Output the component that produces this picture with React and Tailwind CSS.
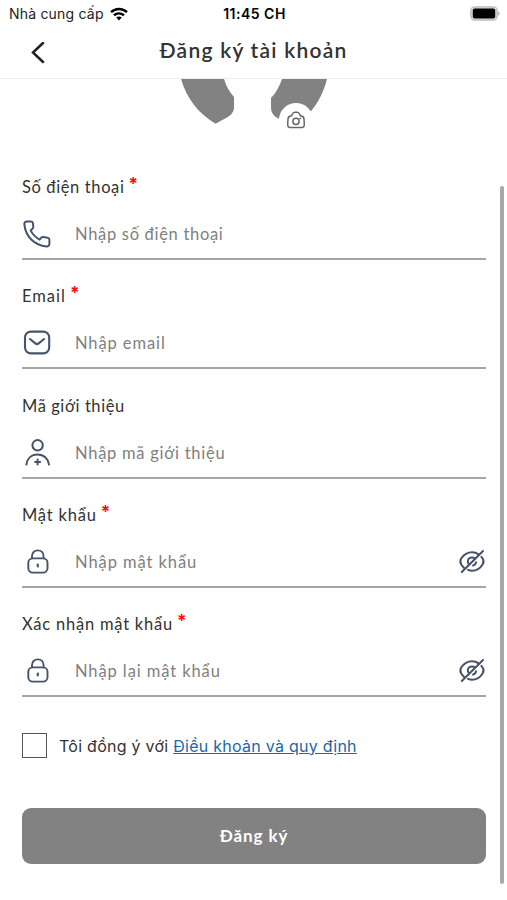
import React, { useState } from 'react';

const PhoneIcon = () => (
  <svg width="28" height="28" viewBox="0 0 28 28" fill="none" stroke="currentColor" strokeWidth="2" strokeLinecap="round" strokeLinejoin="round">
    <path d="M4 1.4H8C9.1 1.4 9.8 2 9.9 3L10.3 6.6C10.4 7.5 10.1 8.2 9.4 8.8L7.6 10.4C9.6 14.2 12.6 17.4 16.6 19.6L18.1 17.8C18.7 17.1 19.4 16.9 20.3 17L24.6 17.7C25.8 17.9 26.4 18.6 26.4 19.7V23.6C26.4 25.6 25.2 26.6 23.4 26.4C11.4 25.4 2.4 16.4 1.4 4.4C1.2 2.6 2.2 1.4 4 1.4Z" />
  </svg>
);

const MailIcon = () => (
  <svg width="28" height="28" viewBox="0 0 28 28" fill="none" stroke="currentColor" strokeWidth="2.1" strokeLinecap="round" strokeLinejoin="round">
    <rect x="2" y="2.6" width="24.2" height="21.8" rx="6" />
    <path d="M7 10L12.3 14.4C13.3 15.2 14.7 15.2 15.7 14.4L21 10" />
  </svg>
);

const ReferralIcon = () => (
  <svg width="28" height="28" viewBox="0 0 28 28" fill="none" stroke="currentColor" strokeWidth="2" strokeLinecap="round">
    <circle cx="14.6" cy="6.3" r="5.2" />
    <path d="M3.4 25.6C4.2 19.6 8.5 15.6 14.6 15.6S25.2 19.6 26 25.6" />
    <path d="M14.6 20.4V25.4M12.1 22.9H17.1" />
  </svg>
);

const LockIcon = () => (
  <svg width="28" height="28" viewBox="0 0 28 28" fill="none" stroke="currentColor" strokeWidth="1.9" strokeLinecap="round">
    <rect x="5.3" y="10.4" width="19.2" height="14.2" rx="4.4" />
    <path d="M9 10.2V8.2C9 4.6 11.4 2.4 14.8 2.4S20.6 4.6 20.6 8.2V10.2" />
    <path d="M14.8 16.6V18.4" strokeWidth="2.2" />
  </svg>
);

const EyeOffIcon = () => (
  <svg width="28" height="28" viewBox="0 0 28 28" fill="none" stroke="currentColor" strokeWidth="2" strokeLinecap="round" strokeLinejoin="round">
    <path d="M20.6 6.4C18.6 5 16.4 4.3 14 4.3C9.6 4.3 5.8 6.7 3.2 10.5C2.1 12.3 2.1 14.7 3.2 16.5C4 17.8 5 18.9 6.1 19.9" />
    <path d="M10 21.9C11.3 22.4 12.6 22.7 14 22.7C18.4 22.7 22.2 20.3 24.6 16.5C25.8 14.7 25.8 12.3 24.6 10.5C24.2 9.9 23.8 9.3 23.4 8.8" />
    <path d="M16.9 10.6C16.1 9.8 15.1 9.4 14 9.4C11.7 9.4 9.8 11.2 9.8 13.5C9.8 14.6 10.3 15.6 11 16.4" />
    <path d="M18 14.3C17.7 16 16.4 17.2 14.8 17.6" />
    <path d="M25 3L3.8 24" />
  </svg>
);

const CameraIcon = () => (
  <svg width="20" height="18" viewBox="0 0 20 18" fill="none" stroke="currentColor" strokeWidth="1.5" strokeLinejoin="round" strokeLinecap="round">
    <path d="M4.9 16.6H15.1C17.4 16.6 18.4 15.2 18.3 13.3L18 8C17.9 6 16.6 5 15.2 4.9C14.7 4.9 14.3 4.5 14 4L13.2 2.5C12.8 1.7 12 1.3 11.2 1.3H8.8C8 1.3 7.2 1.7 6.8 2.5L6 4C5.7 4.5 5.3 4.9 4.8 4.9C3.4 5 2.1 6 2 8L1.7 13.3C1.6 15.2 2.6 16.6 4.9 16.6Z" />
    <circle cx="10" cy="10.4" r="3.1" />
    <path d="M14 7.6L14.6 7.2" />
  </svg>
);

const fields = [
  { id: 'phone', label: 'Số điện thoại', required: true, placeholder: 'Nhập số điện thoại', icon: PhoneIcon, labelClass: 'tracking-[0.62px]', inputClass: 'tracking-[0.69px]' },
  { id: 'email', label: 'Email', required: true, placeholder: 'Nhập email', icon: MailIcon, labelClass: 'tracking-[1px]', inputClass: 'tracking-[0.9px]' },
  { id: 'referral', label: 'Mã giới thiệu', required: false, placeholder: 'Nhập mã giới thiệu', icon: ReferralIcon, labelClass: 'tracking-[0.57px]', inputClass: 'tracking-[0.73px]' },
  { id: 'password', label: 'Mật khẩu', required: true, placeholder: 'Nhập mật khẩu', icon: LockIcon, secret: true, labelClass: 'tracking-[0.8px]', inputClass: 'tracking-[0.93px]' },
  { id: 'confirm', label: 'Xác nhận mật khẩu', required: true, placeholder: 'Nhập lại mật khẩu', icon: LockIcon, secret: true, labelClass: 'tracking-[0.78px]', inputClass: 'tracking-[0.9px]' },
];

const StatusBar = () => (
  <div className="grid h-[27px] grid-cols-3 items-center pl-[9px] pr-[7px] font-['Inter',sans-serif] text-black">
    <div className="flex items-center gap-[6px]">
      <span className="whitespace-nowrap text-[14px] tracking-[0.2px] text-[#222]">Nhà cung cấp</span>
      <svg width="18" height="14" viewBox="0 0 18 14" fill="none" stroke="currentColor" strokeWidth="2.4">
        <path d="M1 5.2C5.5 0.9 12.5 0.9 17 5.2" />
        <path d="M4 8.4C6.8 5.7 11.2 5.7 14 8.4" />
        <path d="M9 13.4L6.2 10.6C7.8 9.1 10.2 9.1 11.8 10.6Z" fill="currentColor" stroke="none" />
      </svg>
    </div>
    <span className="text-center text-[14px] font-semibold tracking-[0.5px]">11:45 CH</span>
    <svg className="justify-self-end" width="30" height="15" viewBox="0 0 30 15">
      <rect x="0.8" y="0.8" width="26.4" height="13.4" rx="4" fill="#d8d8d8" stroke="#bdbdbd" strokeWidth="1.3" />
      <rect x="2.8" y="2.6" width="22.4" height="9.8" rx="2" fill="#000" />
      <path d="M28.3 5.2C30 6 30 9 28.3 9.8Z" fill="#a5a5a5" />
    </svg>
  </div>
);

const Header = () => (
  <header className="grid h-[52px] grid-cols-[54px_1fr_54px] items-center border-b border-[#ededed]">
    <button type="button" className="justify-self-end pr-[9px] text-[#222]">
      <svg width="14" height="22" viewBox="0 0 14 22" fill="none" stroke="currentColor" strokeWidth="2.5" strokeLinecap="round" strokeLinejoin="miter">
        <path d="M12 1L2 10.5L12 20" />
      </svg>
    </button>
    <h1 className="whitespace-nowrap pb-[5px] text-center text-[21px] font-semibold tracking-[1.25px] text-[#333]">Đăng ký tài khoản</h1>
  </header>
);

const Avatar = () => (
  <div className="flex h-[96px] justify-center">
    <div className="relative h-[55px] w-[147px]">
      <svg width="147" height="55" viewBox="181 79 147 55" fill="#828282">
        <path d="M181 79H224C226 86 229.5 92 234 97V108C233.5 113 230 116 226 118L215.5 123.8C198 113 187 99 181 79Z" />
        <path d="M282 79H327C323 95 315 109 303 119H280C274 117 271 113 271 107V98C276 93 279.5 86 282 79Z" />
      </svg>
      <button type="button" className="absolute left-[98px] top-[24px] flex size-[34px] items-center justify-center rounded-full bg-white pb-px text-[#666]">
        <CameraIcon />
      </button>
    </div>
  </div>
);

const Field = ({ field }) => {
  const [visible, setVisible] = useState(false);
  const Icon = field.icon;

  return (
    <div className="h-[84px]">
      <label htmlFor={field.id} className="flex h-6 items-start text-[16.5px] leading-6 text-[#333]">
        <span className={field.labelClass}>{field.label}</span>
        {field.required && <span className="-mt-[3px] ml-[4px] font-['Inter',sans-serif] text-[17px] font-bold text-[#ff0d0d]">*</span>}
      </label>
      <div className="flex h-[61px] items-center border-b-2 border-[#a6a6a6] pt-[11px] text-[#46536b]">
        <span className="ml-[1px] w-[52px] shrink-0">
          <Icon />
        </span>
        <input
          id={field.id}
          type={field.secret && !visible ? 'password' : 'text'}
          placeholder={field.placeholder}
          className={`min-w-0 flex-1 bg-transparent pt-px text-[16.5px] text-[#333] outline-none placeholder:text-[#808080] ${field.inputClass}`}
        />
        {field.secret && (
          <button type="button" onClick={() => setVisible(!visible)}>
            <EyeOffIcon />
          </button>
        )}
      </div>
    </div>
  );
};

function App() {
  const [agreed, setAgreed] = useState(false);

  return (
    <div className="relative h-[900px] w-[507px] overflow-hidden bg-white font-['Lato',sans-serif]">
      <StatusBar />
      <Header />
      <main className="pl-[22px] pr-[21px]">
        <Avatar />
        <form>
          <div className="flex flex-col gap-[25.25px]">
            {fields.map((field) => (
              <Field key={field.id} field={field} />
            ))}
          </div>
          <label className="mt-[37px] flex items-center gap-3 font-['Inter',sans-serif] text-[16px] tracking-[0.26px] text-[#333]">
            <input
              type="checkbox"
              checked={agreed}
              onChange={() => setAgreed(!agreed)}
              className="size-[25px] appearance-none border border-[#555] checked:bg-[#828282]"
            />
            <span className="whitespace-nowrap">
              Tôi đồng ý với <a className="text-[#1769aa] underline">Điều khoản và quy định</a>
            </span>
          </label>
          <button type="button" className="mt-[50px] h-[56px] w-full rounded-[9px] bg-[#828282] text-[17px] font-bold tracking-[0.9px] text-white">
            Đăng ký
          </button>
        </form>
      </main>
      <div className="absolute right-[3px] top-[186px] h-[698px] w-[4px] rounded-full bg-[#a8a8a8]" />
    </div>
  );
}

export default App;
